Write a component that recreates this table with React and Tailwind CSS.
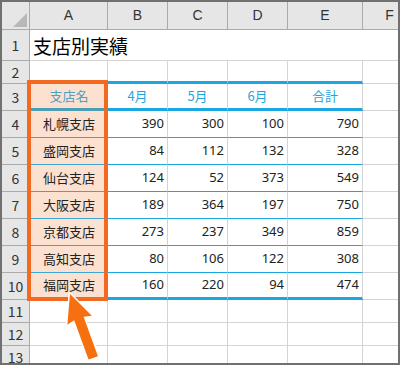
import React from 'react';

const rows = [
  ['札幌支店', 390, 300, 100, 790],
  ['盛岡支店', 84, 112, 132, 328],
  ['仙台支店', 124, 52, 373, 549],
  ['大阪支店', 189, 364, 197, 750],
  ['京都支店', 273, 237, 349, 859],
  ['高知支店', 80, 106, 122, 308],
  ['福岡支店', 160, 220, 94, 474],
];

const font = { fontFamily: '"Noto Sans CJK JP", "Noto Sans", sans-serif' };

function RowHead({ n }) {
  return (
    <div className="flex items-center justify-center bg-[#e6e6e6] border-r border-b border-[#ababab] text-[14px] text-[#333]">
      {n}
    </div>
  );
}

function Blank({ last }) {
  return <div className={last ? 'border-b border-[#d4d4d4]' : 'border-r border-b border-[#d4d4d4]'} />;
}

export default function App() {
  const heads = ['A', 'B', 'C', 'D', 'E', 'F'];
  return (
    <div className="relative w-[400px] h-[365px] overflow-hidden bg-white border-2 border-[#707070]" style={font}>
      <div className="grid grid-cols-[28px_78px_60px_60px_60px_75px_1fr] grid-rows-[28px_31px_23px_27px_repeat(7,27px)_repeat(3,23px)] text-[#222]">
        {/* column header row */}
        <div className="relative bg-[#e6e6e6] border-r border-b border-[#ababab]">
          <div className="absolute right-[2px] bottom-[2px] w-0 h-0 border-l-[14px] border-l-transparent border-b-[14px] border-b-[#b8b8b8]" />
        </div>
        {heads.map((h, i) => (
          <div
            key={h}
            className={
              i === 5
                ? 'flex items-center justify-center bg-[#e6e6e6] border-b border-[#ababab] text-[14px] text-[#333] pl-[18px]'
                : 'flex items-center justify-center bg-[#e6e6e6] border-r border-b border-[#ababab] text-[14px] text-[#333]'
            }
            style={{ fontFamily: '"Liberation Sans", sans-serif' }}
          >
            {h}
          </div>
        ))}

        {/* row 1 */}
        <RowHead n={1} />
        <div className="col-span-5 flex items-center pl-[3px] pt-[2px] text-[19px] text-black border-b border-[#d4d4d4]">
          支店別実績
        </div>
        <Blank last />

        {/* row 2 */}
        <RowHead n={2} />
        <Blank />
        <div className="border-r border-r-[#d4d4d4] border-b-[3px] border-b-[#1aa7e1]" />
        <div className="border-r border-r-[#d4d4d4] border-b-[3px] border-b-[#1aa7e1]" />
        <div className="border-r border-r-[#d4d4d4] border-b-[3px] border-b-[#1aa7e1]" />
        <div className="border-r border-r-[#d4d4d4] border-b-[3px] border-b-[#1aa7e1]" />
        <Blank last />

        {/* row 3 header */}
        <RowHead n={3} />
        <div className="flex items-center justify-center bg-[#fde1d0] text-[13px] text-[#4aa3c4] border-b-[3px] border-b-[#4a9fb6]">支店名</div>
        {['4月', '5月', '6月'].map((m) => (
          <div key={m} className="flex items-center justify-center text-[13px] text-[#1ea6e0] border-r border-r-[#d4d4d4] border-b-[3px] border-b-[#1aa7e1]">{m}</div>
        ))}
        <div className="flex items-center justify-center text-[13px] text-[#1ea6e0] border-r border-r-[#d4d4d4] border-b-[3px] border-b-[#1aa7e1]">合計</div>
        <Blank last />

        {/* data rows */}
        {rows.map((r, i) => {
          const end = i === rows.length - 1;
          return (
            <React.Fragment key={r[0]}>
              <RowHead n={i + 4} />
              <div className={end ? 'flex items-center justify-center bg-[#fde1d0] text-[13px] text-[#222] border-b-[3px] border-b-[#1aa7e1]' : 'flex items-center justify-center bg-[#fde1d0] text-[13px] text-[#222] border-b border-b-[#3aa6d6]'}>
                {r[0]}
              </div>
              {r.slice(1).map((v, j) => (
                <div
                  key={j}
                  className={end
                    ? 'flex items-center justify-end pr-[3px] text-[13px] text-[#222] border-r border-r-[#d4d4d4] border-b-[3px] border-b-[#1aa7e1]'
                    : 'flex items-center justify-end pr-[3px] text-[13px] text-[#222] border-r border-r-[#d4d4d4] border-b border-b-[#1aa7e1]'}
                  style={{ fontFamily: '"Noto Sans", sans-serif' }}
                >
                  {v}
                </div>
              ))}
              <Blank last />
            </React.Fragment>
          );
        })}

        {/* empty rows */}
        {[11, 12, 13].map((n) => (
          <React.Fragment key={n}>
            <RowHead n={n} />
            <Blank />
            <Blank />
            <Blank />
            <Blank />
            <Blank />
            <Blank last />
          </React.Fragment>
        ))}
      </div>

      {/* orange selection box */}
      <div className="absolute left-[25px] top-[78px] w-[81px] h-[221px] border-4 border-[#f26a21] pointer-events-none" />

      {/* arrow */}
      <svg className="absolute left-0 top-0" width="400" height="365" viewBox="0 0 400 365">
        <g transform="translate(68 292) rotate(-20)">
          <polygon
            points="0,0 13,28 5,26 5,68 -5,68 -5,26 -13,28"
            fill="#f7700f"
            stroke="#ffffff"
            strokeWidth="3"
            strokeLinejoin="round"
            paintOrder="stroke"
          />
        </g>
      </svg>
    </div>
  );
}
